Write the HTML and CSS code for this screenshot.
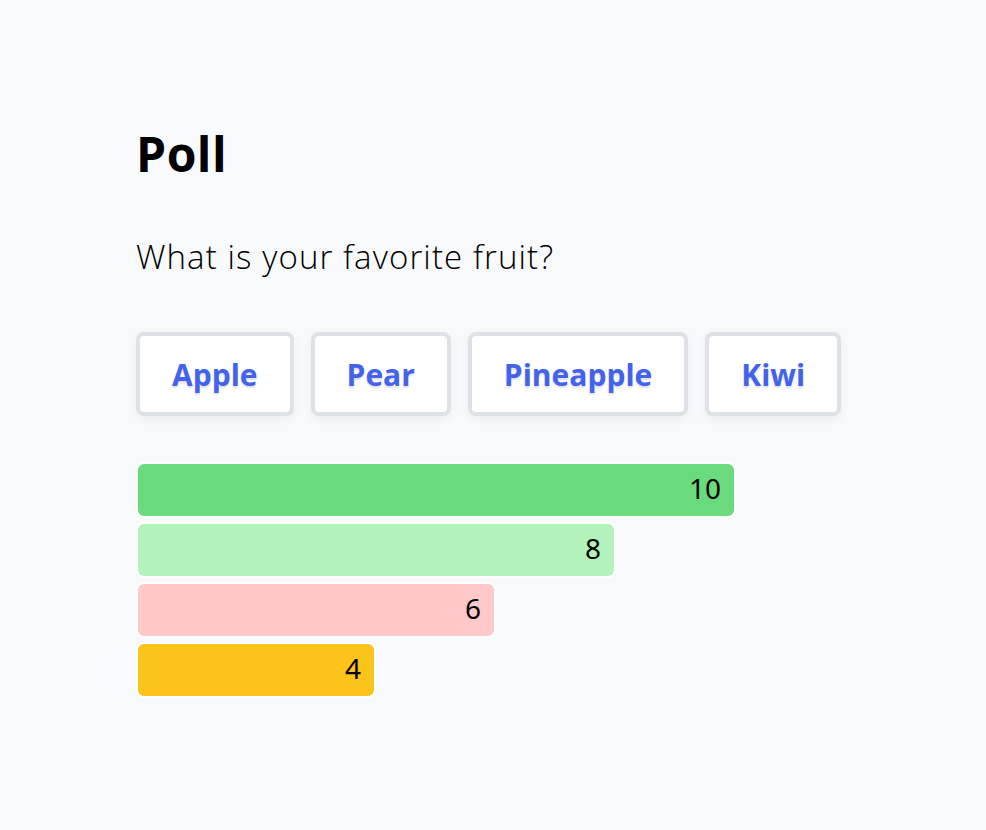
FILE: index.html
```html
<!DOCTYPE html>
<html lang="en">
<head>
<meta charset="utf-8">
<title>Poll</title>
<link rel="stylesheet" href="styles.css">
</head>
<body>
  <main class="poll">
    <h1 class="poll-title">Poll</h1>
    <p class="poll-question">What is your favorite fruit?</p>
    <div class="poll-options">
      <button class="option">Apple</button>
      <button class="option">Pear</button>
      <button class="option">Pineapple</button>
      <button class="option">Kiwi</button>
    </div>
    <div class="results">
      <div class="bar bar-green" style="width:600px">10</div>
      <div class="bar bar-lightgreen" style="width:480px">8</div>
      <div class="bar bar-pink" style="width:360px">6</div>
      <div class="bar bar-yellow" style="width:240px">4</div>
    </div>
  </main>
</body>
</html>
```

FILE: styles.css
```css
html, body {
  margin: 0;
  padding: 0;
  background: #f8f9fa;
}

body {
  font-family: "Open Sans", Lato, sans-serif;
  color: #000;
}

.poll {
  padding: 126px 136px 40px;
}

.poll-title {
  margin: 0;
  font-size: 48px;
  line-height: 56px;
  font-weight: 700;
  letter-spacing: 0.5px;
}

.poll-question {
  margin: 55px 0 0;
  font-size: 33px;
  line-height: 40px;
  font-weight: 300;
  letter-spacing: 1.1px;
}

.poll-options {
  display: flex;
  gap: 17px;
  margin-top: 55px;
}

.option {
  box-sizing: border-box;
  height: 84px;
  padding: 0 32px;
  background: #fff;
  border: 4px solid #dee2e6;
  border-radius: 8px;
  box-shadow: 0 3px 10px rgba(0, 0, 0, 0.05);
  font-family: inherit;
  font-size: 30px;
  font-weight: 700;
  color: #4263eb;
  text-shadow: 0 2px 2px #e3dde3;
  cursor: pointer;
}

.results {
  display: flex;
  flex-direction: column;
  gap: 4px;
  margin-top: 46px;
}

.bar {
  box-sizing: border-box;
  height: 56px;
  border: 2px solid #fff;
  border-radius: 8px;
  padding-right: 13px;
  text-align: right;
  font-family: "Noto Sans", "Open Sans", sans-serif;
  font-size: 28px;
  line-height: 48px;
  color: #000;
}

.bar-green { background: #69db7c; }
.bar-lightgreen { background: #b2f2bb; }
.bar-pink { background: #ffc9c9; }
.bar-yellow { background: #fcc419; }
```
